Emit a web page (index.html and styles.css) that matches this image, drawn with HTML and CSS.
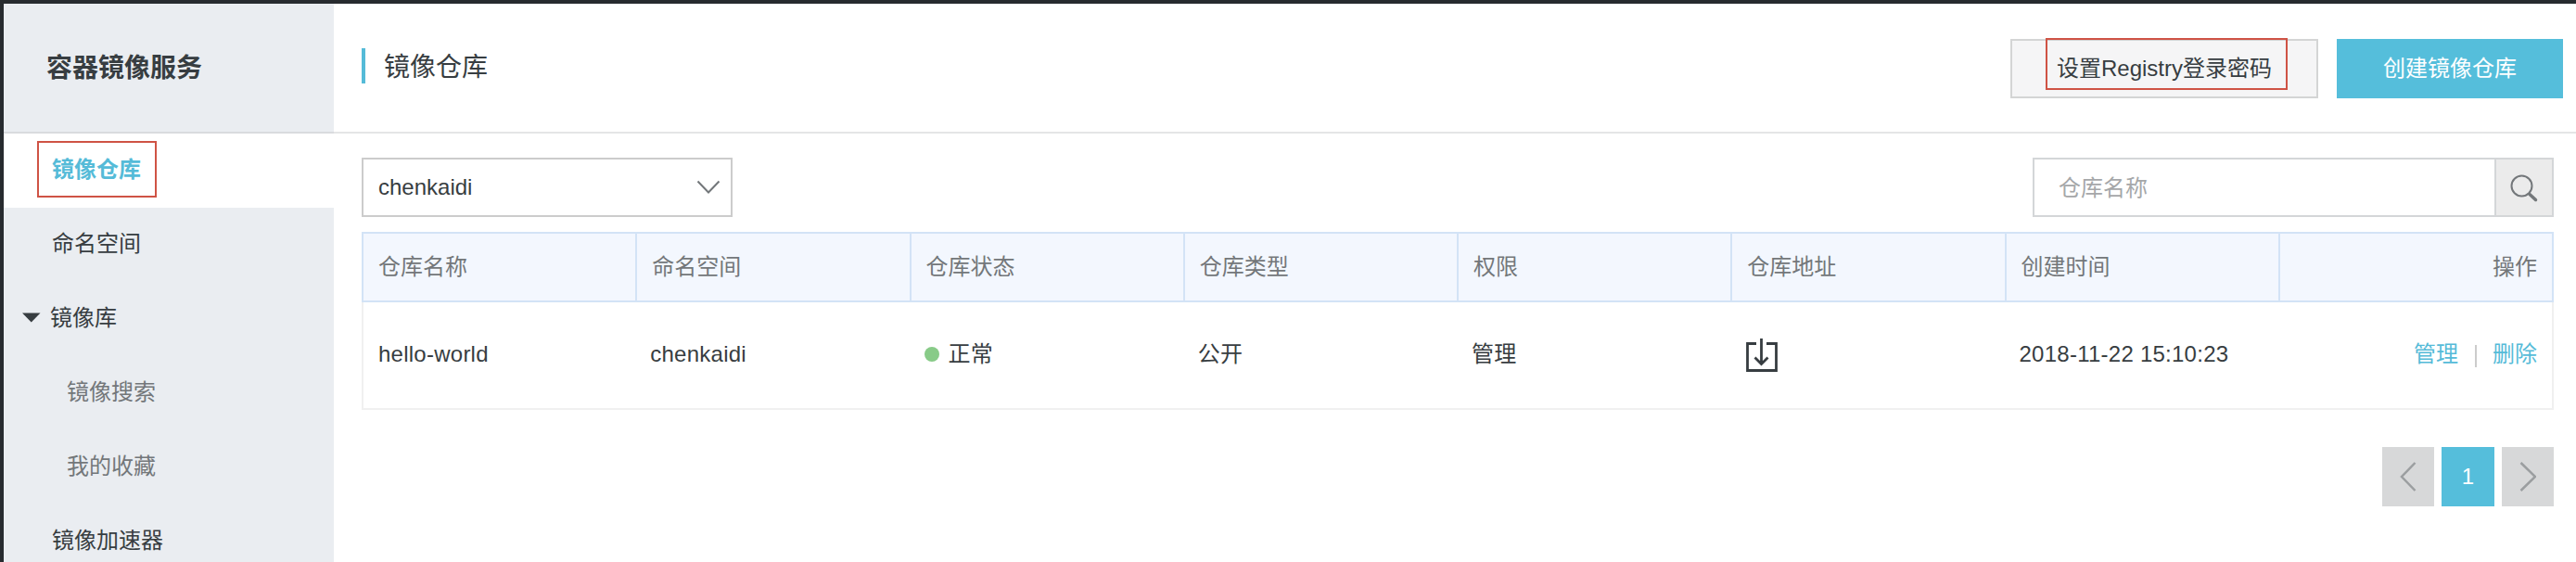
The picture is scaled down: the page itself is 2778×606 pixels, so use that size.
FILE: index.html
```html
<!DOCTYPE html>
<html lang="zh-CN">
<head>
<meta charset="utf-8">
<title>容器镜像服务</title>
<link rel="stylesheet" href="styles.css">
</head>
<body>
<div class="frame">
  <aside class="sidebar">
    <div class="brand">容器镜像服务</div>
    <nav class="menu">
      <a class="item active"><span class="mark">镜像仓库</span></a>
      <a class="item">命名空间</a>
      <a class="item group"><svg class="caret" width="20" height="12" viewBox="0 0 20 12"><path d="M0 .5h19.500L9.750 10.500z" fill="#373d41"/></svg>镜像库</a>
      <a class="item sub">镜像搜索</a>
      <a class="item sub">我的收藏</a>
      <a class="item">镜像加速器</a>
    </nav>
  </aside>
  <main class="main">
    <header class="header">
      <h1 class="title">镜像仓库</h1>
      <div class="actions">
        <button class="btn"><span class="btn-mark"></span>设置Registry登录密码</button>
        <button class="btn primary">创建镜像仓库</button>
      </div>
    </header>
    <section class="content">
      <div class="filters">
        <div class="select">chenkaidi
          <svg width="26" height="16" viewBox="0 0 26 16" fill="none" stroke="#73777a" stroke-width="2"><path d="M1.500 1.500L13 13.500 24.500 1.500"/></svg>
        </div>
        <div class="search">
          <span class="placeholder">仓库名称</span>
          <span class="search-btn">
            <svg width="32" height="32" viewBox="0 0 32 32" fill="none" stroke="#73777a" stroke-linecap="round"><circle cx="13.500" cy="13.500" r="11" stroke-width="2"/><path d="M22 22.500l6.500 6" stroke-width="3.500"/></svg>
          </span>
        </div>
      </div>
      <div class="table">
        <div class="row head">
          <div>仓库名称</div><div>命名空间</div><div>仓库状态</div><div>仓库类型</div><div>权限</div><div>仓库地址</div><div>创建时间</div><div class="right">操作</div>
        </div>
        <div class="row body">
          <div>hello-world</div>
          <div>chenkaidi</div>
          <div><i class="dot"></i>正常</div>
          <div>公开</div>
          <div>管理</div>
          <div><svg class="download" width="36" height="38" viewBox="0 0 36 38" fill="none" stroke="#373d41" stroke-width="2.800"><path d="M12 6.500H2.500v29h31v-29H23M17.500 1v27M10.500 21.500l7 7 7-7"/></svg></div>
          <div>2018-11-22 15:10:23</div>
          <div class="right"><a class="link">管理</a><i class="sep"></i><a class="link">删除</a></div>
        </div>
      </div>
      <div class="pager">
        <span class="page"><svg width="18" height="32" viewBox="0 0 18 32" fill="none" stroke="#9b9ea0" stroke-width="2.500"><path d="M16.500 1L2 16l14.500 15"/></svg></span>
        <span class="page current">1</span>
        <span class="page"><svg width="18" height="32" viewBox="0 0 18 32" fill="none" stroke="#9b9ea0" stroke-width="2.500"><path d="M1.500 1L17 16 1.500 31"/></svg></span>
      </div>
    </section>
  </main>
</div>
</body>
</html>
```
FILE: styles.css
```css
* { box-sizing: border-box; }
body {
  margin: 0;
  overflow: hidden;
  background: #fff;
  color: #373d41;
  font: 24px/36px "Liberation Sans", "Noto Sans CJK SC", sans-serif;
}
svg { display: block; flex: none; }
.frame {
  display: flex;
  height: 606px;
  border-top: 4px solid #272b2f;
  border-left: 4px solid #272b2f;
}
.sidebar {
  flex: none;
  width: 356px;
  background: #eaedf1;
  overflow: hidden;
}
.brand {
  display: flex;
  align-items: center;
  height: 140px;
  padding: 2px 0 0 46px;
  border-bottom: 2px solid #d9dbde;
  font-size: 28px;
  font-weight: 700;
}
.menu { display: flex; flex-direction: column; }
.item {
  display: flex;
  align-items: center;
  height: 80px;
  padding: 0 0 2px 52px;
}
.active { background: #fff; padding-left: 36px; padding-bottom: 3px; }
.mark {
  height: 61px;
  width: 129px;
  padding: 11px 0 0 14px;
  border: 2px solid #cf5345;
  color: #55bbd8;
  font-weight: 700;
}
.group { padding-left: 20px; gap: 10px; }
.sub { padding-left: 68px; color: #73777a; }
.main { flex: 1; min-width: 0; }
.header {
  display: flex;
  justify-content: space-between;
  height: 140px;
  padding: 38px 14px 0 30px;
  border-bottom: 2px solid #e4e5e6;
}
.title {
  margin: 10px 0 0;
  height: 38px;
  padding-left: 20px;
  border-left: 4px solid #55bbd8;
  font-size: 28px;
  font-weight: 400;
  line-height: 41px;
}
.actions { display: flex; gap: 20px; }
.btn {
  position: relative;
  width: 332px;
  height: 64px;
  padding: 0 0 1px;
  border: 2px solid #d4d5d5;
  background: #f5f5f6;
  color: inherit;
  font: inherit;
}
.primary { width: 244px; border: 0; background: #55bedb; color: #fff; }
.btn-mark {
  position: absolute;
  left: 36px;
  top: -3px;
  width: 261px;
  height: 56px;
  border: 2px solid #cf5345;
}
.content { padding: 26px 24px 0 30px; }
.filters { display: flex; justify-content: space-between; margin-bottom: 16px; }
.select {
  display: flex;
  align-items: center;
  justify-content: space-between;
  width: 400px;
  height: 64px;
  padding: 0 11px 0 16px;
  border: 2px solid #ccc;
}
.select svg { margin-top: -1px; }
.search { display: flex; width: 562px; height: 64px; border: 2px solid #d4d6d8; }
.placeholder { flex: 1; padding: 13px 0 0 26px; color: #a5a7a9; }
.search-btn {
  display: flex;
  align-items: center;
  width: 62px;
  padding: 2px 0 0 14px;
  border-left: 2px solid #d4d6d8;
  background: #ebebeb;
}
.row { display: grid; grid-template-columns: repeat(7, 295.25px) 1fr; }
.row > div { display: flex; align-items: center; }
.head {
  height: 76px;
  border: solid #d3e3f6;
  border-width: 2px 2px 2px 0;
  background: #f3f7fe;
  color: #73777a;
}
.head > div { border-left: 2px solid #d3e3f6; padding: 0 0 1px 16px; }
.body {
  height: 116px;
  border: 2px solid #f0f0f0;
  border-top: 0;
  letter-spacing: .25px;
}
.body > div { padding: 0 0 2px 14px; }
.body > div:first-child { padding-left: 16px; }
.row > .right { justify-content: flex-end; padding-right: 16px; }
.body > .right { letter-spacing: 0; }
.dot { width: 16px; height: 16px; margin-right: 10px; border-radius: 50%; background: #88cb88; }
.download { margin-top: 2px; }
.link { color: #55bbd8; }
.sep { width: 2px; height: 24px; margin: 3px 17px 0 18px; background: #ccc; }
.pager { display: flex; justify-content: flex-end; gap: 8px; margin-top: 40px; }
.page {
  display: flex;
  align-items: center;
  justify-content: center;
  width: 56px;
  height: 64px;
  background: #d7d8d9;
}
.current { width: 57px; background: #55bedb; color: #fff; }
```
